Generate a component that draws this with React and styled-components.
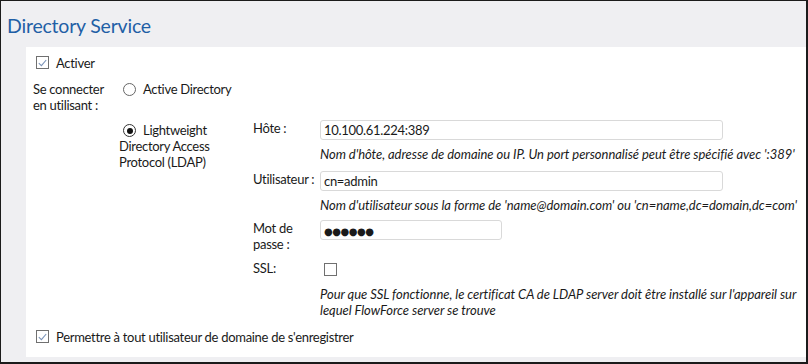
import React from "react";
import styled, { createGlobalStyle } from "styled-components";

const Global = createGlobalStyle`
  html, body { margin: 0; padding: 0; background: #fff; }
  body { font-family: Lato, "Noto Sans", sans-serif; }
  * { box-sizing: border-box; }
`;

const Frame = styled.div`
  width: 808px;
  height: 364px;
  background: #efeff2;
  border-style: solid;
  border-color: #1b1b1b;
  border-width: 1px 2px 2px 1px;
  display: flex;
  flex-direction: column;
  overflow: hidden;
`;

const Title = styled.h1`
  flex: none;
  margin: 0;
  height: 46px;
  padding: 12px 0 0 6px;
  font-size: 19.5px;
  font-weight: 400;
  color: #1f5fa6;
  line-height: 26px;
  letter-spacing: -0.2px;
`;

const Panel = styled.div`
  flex: 1;
  margin: 0 0 5px 25px;
  background: #fff;
  padding: 7px 0 0 7px;
  color: #1a1a1a;
  font-size: 13px;
  line-height: 16px;
  letter-spacing: -0.3px;
`;

const CheckRow = styled.label`
  display: flex;
  align-items: center;
  gap: 7px;
  margin-left: ${(p) => p.$indent || 0}px;
  margin-top: ${(p) => p.$top || 0}px;
  height: 17px;
`;

const Box = styled.span`
  width: 13px;
  height: 13px;
  border: 1px solid #707070;
  background: #fff;
  display: inline-flex;
  align-items: center;
  justify-content: center;
  flex: none;
`;

const Checkbox = ({ checked }) => (
  <Box>
    {checked && (
      <svg width="9" height="8" viewBox="0 0 9 8">
        <path d="M0.8 4.2 L3.4 6.6 L8.2 1" fill="none" stroke="#7a93b8" strokeWidth="1.1" />
      </svg>
    )}
  </Box>
);

const ConnectGrid = styled.div`
  display: grid;
  grid-template-columns: 86px 134px 1fr;
  row-gap: 23px;
  margin-top: 10px;
`;

const ConnectLabel = styled.div`
  grid-row: 1 / span 2;
`;

const RadioOption = styled.div`
  grid-column: 2;
  padding-top: ${(p) => p.$top || 0}px;
  padding-right: 14px;
`;

const Circle = styled.span`
  display: inline-block;
  width: 13px;
  height: 13px;
  border-radius: 50%;
  border: 1px solid ${(p) => (p.$on ? "#333" : "#666")};
  vertical-align: -2px;
  margin: 0 7px 0 4px;
  position: relative;
  background: #fff;
  &::after {
    content: "";
    display: ${(p) => (p.$on ? "block" : "none")};
    position: absolute;
    left: 2.5px;
    top: 2.5px;
    width: 6px;
    height: 6px;
    border-radius: 50%;
    background: #111;
  }
`;

const Fields = styled.div`
  grid-column: 3;
  grid-row: 2;
  display: grid;
  grid-template-columns: 67px 1fr;
`;

const FieldLabel = styled.div`
  padding-top: ${(p) => p.$pt || 0}px;
  white-space: nowrap;
`;

const FieldBody = styled.div`
  display: flex;
  flex-direction: column;
`;

const Input = styled.div`
  width: ${(p) => p.$w}px;
  height: 20px;
  border: 1px solid #d9d9d9;
  border-radius: 3px;
  padding: 1px 0 0 3px;
  line-height: 17px;
  color: #1a1a1a;
`;

const Dots = styled.span`
  font-family: "DejaVu Sans", sans-serif;
  font-size: 10px;
  letter-spacing: -0.5px;
  line-height: 16px;
`;

const Help = styled.div`
  font-style: italic;
  letter-spacing: -0.05px;
  margin-top: ${(p) => p.$mt ?? 6}px;
  margin-bottom: ${(p) => p.$mb ?? 9}px;
  line-height: 16px;
  white-space: ${(p) => (p.$wrap ? "normal" : "nowrap")};
  max-width: 486px;
`;

const SslBox = styled.div`
  padding: 11px 0 0 4px;
  height: 24px;
`;

export default function App() {
  return (
    <>
      <Global />
      <Frame>
        <Title>Directory Service</Title>
        <Panel>
          <CheckRow $indent={3}>
            <Checkbox checked />
            <span>Activer</span>
          </CheckRow>
          <ConnectGrid>
            <ConnectLabel>
              Se connecter
              <br />
              en utilisant :
            </ConnectLabel>
            <RadioOption>
              <Circle />
              Active Directory
            </RadioOption>
            <RadioOption $top={2}>
              <Circle $on />
              Lightweight Directory Access Protocol (LDAP)
            </RadioOption>
            <Fields>
              <FieldLabel>Hôte :</FieldLabel>
              <FieldBody>
                <Input $w={403}>10.100.61.224:389</Input>
                <Help>
                  Nom d'hôte, adresse de domaine ou IP. Un port personnalisé peut être spécifié avec ':389'
                </Help>
              </FieldBody>
              <FieldLabel>Utilisateur :</FieldLabel>
              <FieldBody>
                <Input $w={403}>cn=admin</Input>
                <Help $mb={7}>
                  Nom d'utilisateur sous la forme de 'name@domain.com' ou 'cn=name,dc=domain,dc=com'
                </Help>
              </FieldBody>
              <FieldLabel $pt={-1}>
                Mot de
                <br />
                passe :
              </FieldLabel>
              <FieldBody>
                <Input $w={182}>
                  <Dots>●●●●●●</Dots>
                </Input>
              </FieldBody>
              <FieldLabel $pt={8}>SSL:</FieldLabel>
              <FieldBody>
                <SslBox>
                  <Checkbox />
                </SslBox>
                <Help $wrap $mt={10} $mb={0}>
                  Pour que SSL fonctionne, le certificat CA de LDAP server doit être installé sur l'appareil sur lequel FlowForce server se trouve
                </Help>
              </FieldBody>
            </Fields>
          </ConnectGrid>
          <CheckRow $indent={3} $top={10}>
            <Checkbox checked />
            <span>Permettre à tout utilisateur de domaine de s'enregistrer</span>
          </CheckRow>
        </Panel>
      </Frame>
    </>
  );
}
